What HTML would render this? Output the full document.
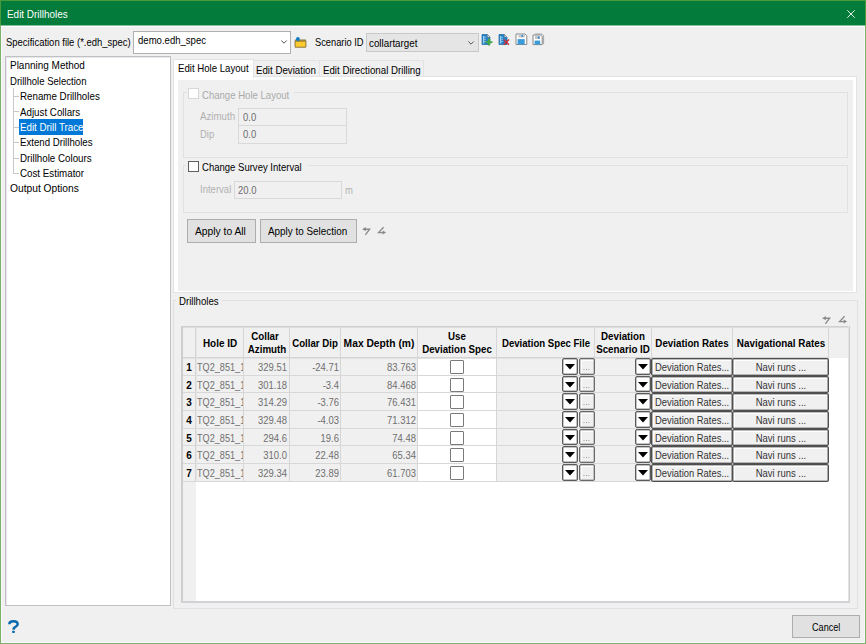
<!DOCTYPE html>
<html><head><meta charset="utf-8">
<style>
*{box-sizing:border-box;margin:0;padding:0}
html,body{width:866px;height:644px;overflow:hidden;background:#f0f0f0}
body{font-family:"Liberation Sans",sans-serif;font-size:10px;color:#000;position:relative;}
.a{position:absolute}
.t{position:absolute;white-space:nowrap;line-height:1}
svg{position:absolute;overflow:visible}
</style></head>
<body>
<div class="a" style="left:0px;top:0px;width:866px;height:644px;background:#f0f0f0;"></div>
<div class="a" style="left:0px;top:0px;width:866px;height:25px;background:#037c3b;"></div>
<div class="a" style="left:0px;top:25px;width:866px;height:1px;background:#84bf9c;"></div>
<div class="a" style="left:0px;top:0px;width:866px;height:1px;background:#4a9a3c;"></div>
<div class="a" style="left:0px;top:26px;width:866px;height:1px;background:#fbfbfb;"></div>
<div class="a" style="left:0px;top:0px;width:1px;height:644px;background:#7bb26a;"></div>
<div class="a" style="left:0px;top:0px;width:1px;height:25px;background:#4a9a3c;"></div>
<div class="a" style="left:865px;top:0px;width:1px;height:644px;background:#7bb26a;"></div>
<div class="a" style="left:865px;top:0px;width:1px;height:25px;background:#4a9a3c;"></div>
<div class="a" style="left:0px;top:643px;width:866px;height:1px;background:#7bb26a;"></div>
<div class="a" style="left:1px;top:26px;width:1px;height:617px;background:#f9f7f9;"></div>
<div class="a" style="left:864px;top:26px;width:1px;height:617px;background:#f9f7f9;"></div>
<div class="a" style="left:1px;top:642px;width:864px;height:1px;background:#f9f7f9;"></div>
<div class="t" style="left:7.4px;top:9px;font-size:10.5px;color:#fff;transform-origin:0 0;transform:scaleX(0.9446);">Edit Drillholes</div>
<svg style="left:847px;top:10px" width="8" height="8"><path d="M0.3 0.3L7.7 7.7M7.7 0.3L0.3 7.7" stroke="#fff" stroke-width="0.9"/></svg>
<div class="t" style="left:6px;top:37px;font-size:10.5px;color:#000;transform-origin:0 0;transform:scaleX(0.9011);">Specification file (*.edh_spec)</div>
<div class="a" style="left:133px;top:31px;width:158px;height:23px;background:#fff;border:1px solid #b0b0b0;"></div>
<div class="t" style="left:138.2px;top:35px;font-size:10.5px;color:#000;transform-origin:0 0;transform:scaleX(0.9104);">demo.edh_spec</div>
<svg style="left:281px;top:40px" width="6" height="4"><path d="M0.3 0.5L3 3.2L5.7 0.5" stroke="#444" stroke-width="0.9" fill="none"/></svg>
<svg style="left:294px;top:36px" width="13" height="12">
<path d="M1.2 3.9H11.8V11.1H1.2z" fill="#b8963a" stroke="#7d6a35" stroke-width="0.7"/>
<path d="M1.2 5.3H11.8V11.1H1.2z" fill="#fdcb2f" stroke="#8a7335" stroke-width="0.7"/>
<path d="M3.9 5.3C2.6 4.6 2 3.8 2 2.9A1.9 1.9 0 0 1 5.8 2.9C5.8 3.8 5.2 4.6 3.9 5.3z" fill="#0b7cc2"/>
</svg>
<div class="t" style="left:314.7px;top:37px;font-size:10.5px;color:#000;transform-origin:0 0;transform:scaleX(0.8847);">Scenario ID</div>
<div class="a" style="left:366px;top:33px;width:113px;height:19px;background:#e5e5e5;border:1px solid #c9c9c9;"></div>
<div class="t" style="left:369.1px;top:38px;font-size:10.5px;color:#000;transform-origin:0 0;transform:scaleX(0.9323);">collartarget</div>
<svg style="left:468.3px;top:41px" width="6" height="4"><path d="M0.3 0.5L3 3.2L5.7 0.5" stroke="#444" stroke-width="0.9" fill="none"/></svg>
<svg style="left:481px;top:34px" width="13" height="13"><path d="M1 0.5h5.5l2.5 2.5v7.5h-8z" fill="#2a82c4" stroke="#1d679e" stroke-width="0.7"/><path d="M6.5 0.5v2.5h2.5z" fill="#e8e8e8" stroke="#8a8a8a" stroke-width="0.6"/><path d="M2.6 2v7.6" stroke="#9fd0f0" stroke-width="1.3"/><path d="M3.4 3.3h1.4M3.4 5.4h1.4M3.4 7.5h1.4" stroke="#9fd0f0" stroke-width="0.9"/><path d="M8 4.6v7M4.5 8.1h7" stroke="#45a83f" stroke-width="1.9"/></svg>
<svg style="left:498px;top:34px" width="13" height="13"><path d="M1 0.5h5.5l2.5 2.5v7.5h-8z" fill="#2a82c4" stroke="#1d679e" stroke-width="0.7"/><path d="M6.5 0.5v2.5h2.5z" fill="#e8e8e8" stroke="#8a8a8a" stroke-width="0.6"/><path d="M2.6 2v7.6" stroke="#9fd0f0" stroke-width="1.3"/><path d="M3.4 3.3h1.4M3.4 5.4h1.4M3.4 7.5h1.4" stroke="#9fd0f0" stroke-width="0.9"/><path d="M5.8 5.5l5.2 5.2M11 5.5l-5.2 5.2" stroke="#cf2a30" stroke-width="1.35"/></svg>
<svg style="left:514.5px;top:33px" width="14" height="14"><path d="M1 1H10L11.8 2.8V11.5H1z" fill="#fff" stroke="#7c7c7c" stroke-width="0.9"/><rect x="3.4" y="1.3" width="6.3" height="3.2" fill="#c6c6c6"/><rect x="6.5" y="1.7" width="1.6" height="2.2" fill="#3d8fd3"/><rect x="2.6" y="6.1" width="7.1" height="5.4" fill="#3b9ad8"/></svg>
<svg style="left:531.5px;top:33px" width="14" height="14"><path d="M3 1H9.8L11.6 2.8V11.2" fill="none" stroke="#9a9a9a" stroke-width="0.9"/><path d="M1 2H8.6L10.2 3.6V11.6H1z" fill="#fff" stroke="#7c7c7c" stroke-width="0.9"/><rect x="3" y="2.4" width="5" height="3.6" fill="#c6c6c6"/><rect x="5.8" y="3.4" width="1.8" height="2.3" fill="#3d8fd3"/><rect x="2.6" y="7.6" width="5.6" height="4" fill="#3b9ad8"/></svg>
<div class="a" style="left:5px;top:56px;width:166px;height:550px;background:#fff;border:1px solid #c0c1c5;box-shadow:inset 1px 1px 0 #e8e8ea"></div>
<div class="t" style="left:10px;top:60px;font-size:10.5px;color:#000;transform-origin:0 0;transform:scaleX(0.9500);">Planning Method</div>
<div class="t" style="left:10px;top:76px;font-size:10.5px;color:#000;transform-origin:0 0;transform:scaleX(0.9100);">Drillhole Selection</div>
<div class="t" style="left:20px;top:91px;font-size:10.5px;color:#000;transform-origin:0 0;transform:scaleX(0.9300);">Rename Drillholes</div>
<div class="a" style="left:14px;top:96px;width:5px;height:1px;background:#c8c8c8;"></div>
<div class="t" style="left:20px;top:107px;font-size:10.5px;color:#000;transform-origin:0 0;transform:scaleX(0.9300);">Adjust Collars</div>
<div class="a" style="left:14px;top:111px;width:5px;height:1px;background:#c8c8c8;"></div>
<div class="a" style="left:19px;top:119px;width:64px;height:16px;background:#0078d7;"></div>
<div class="t" style="left:20px;top:122px;font-size:10.5px;color:#fff;transform-origin:0 0;transform:scaleX(0.9300);">Edit Drill Trace</div>
<div class="a" style="left:14px;top:127px;width:5px;height:1px;background:#c8c8c8;"></div>
<div class="t" style="left:20px;top:137px;font-size:10.5px;color:#000;transform-origin:0 0;transform:scaleX(0.9200);">Extend Drillholes</div>
<div class="a" style="left:14px;top:142px;width:5px;height:1px;background:#c8c8c8;"></div>
<div class="t" style="left:20px;top:153px;font-size:10.5px;color:#000;transform-origin:0 0;transform:scaleX(0.9300);">Drillhole Colours</div>
<div class="a" style="left:14px;top:158px;width:5px;height:1px;background:#c8c8c8;"></div>
<div class="t" style="left:20px;top:168px;font-size:10.5px;color:#000;transform-origin:0 0;transform:scaleX(0.9300);">Cost Estimator</div>
<div class="a" style="left:14px;top:173px;width:5px;height:1px;background:#c8c8c8;"></div>
<div class="t" style="left:10px;top:183px;font-size:10.5px;color:#000;transform-origin:0 0;transform:scaleX(0.9750);">Output Options</div>
<div class="a" style="left:13px;top:88px;width:1px;height:86px;background:#c8c8c8;"></div>
<div class="a" style="left:173px;top:76px;width:684px;height:217px;background:#fff;border:1px solid #e3e3e3;"></div>
<div class="a" style="left:178px;top:80px;width:675px;height:211px;background:#f0f0f0;"></div>
<div class="a" style="left:253px;top:60px;width:67px;height:17px;background:#f0f0f0;border:1px solid #e3e3e3;"></div>
<div class="a" style="left:319px;top:60px;width:105px;height:17px;background:#f0f0f0;border:1px solid #e3e3e3;"></div>
<div class="a" style="left:173px;top:59px;width:81px;height:19px;background:#fff;border:1px solid #e3e3e3;border-bottom:none"></div>
<div class="t" style="left:178.2px;top:63px;font-size:10.5px;color:#000;transform-origin:0 0;transform:scaleX(0.9166);">Edit Hole Layout</div>
<div class="t" style="left:256px;top:65px;font-size:10.5px;color:#000;transform-origin:0 0;transform:scaleX(0.9239);">Edit Deviation</div>
<div class="t" style="left:323.1px;top:65px;font-size:10.5px;color:#000;transform-origin:0 0;transform:scaleX(0.9246);">Edit Directional Drilling</div>
<div class="a" style="left:183px;top:92px;width:665px;height:66px;border:1px solid #e1e1e1;"></div>
<div class="a" style="left:187px;top:84px;width:107px;height:12px;background:#f0f0f0;"></div>
<div class="a" style="left:188px;top:88px;width:11px;height:11px;background:#fff;border:1px solid #d8d8d8;"></div>
<div class="t" style="left:202px;top:90px;font-size:10.5px;color:#aaaaaa;transform-origin:0 0;transform:scaleX(0.9111);">Change Hole Layout</div>
<div class="t" style="left:199.7px;top:111px;font-size:10.5px;color:#b0b0b0;transform-origin:0 0;transform:scaleX(0.9268);">Azimuth</div>
<div class="a" style="left:238px;top:108px;width:109px;height:18px;background:#f0f0f0;border:1px solid #d9d9d9;"></div>
<div class="t" style="left:243px;top:112px;font-size:10.5px;color:#6d6d6d;transform-origin:0 0;transform:scaleX(0.9000);">0.0</div>
<div class="t" style="left:200px;top:129px;font-size:10.5px;color:#b0b0b0;transform-origin:0 0;transform:scaleX(0.9000);">Dip</div>
<div class="a" style="left:238px;top:125px;width:109px;height:19px;background:#f0f0f0;border:1px solid #d9d9d9;"></div>
<div class="t" style="left:243px;top:129px;font-size:10.5px;color:#6d6d6d;transform-origin:0 0;transform:scaleX(0.9000);">0.0</div>
<div class="a" style="left:183px;top:165px;width:665px;height:48px;border:1px solid #e1e1e1;"></div>
<div class="a" style="left:186px;top:158px;width:122px;height:12px;background:#f0f0f0;"></div>
<div class="a" style="left:188px;top:161px;width:11px;height:11px;background:#fff;border:1px solid #5e5e5e;"></div>
<div class="t" style="left:202px;top:162px;font-size:10.5px;color:#000;transform-origin:0 0;transform:scaleX(0.9077);">Change Survey Interval</div>
<div class="t" style="left:200px;top:184px;font-size:10.5px;color:#b0b0b0;transform-origin:0 0;transform:scaleX(0.9091);">Interval</div>
<div class="a" style="left:234px;top:181px;width:108px;height:18px;background:#f0f0f0;border:1px solid #d9d9d9;"></div>
<div class="t" style="left:238px;top:185px;font-size:10.5px;color:#6d6d6d;transform-origin:0 0;transform:scaleX(0.9000);">20.0</div>
<div class="t" style="left:345px;top:185px;font-size:10.5px;color:#b0b0b0;transform-origin:0 0;transform:scaleX(0.9000);">m</div>
<div class="a" style="left:187px;top:219px;width:69px;height:24px;background:#e1e1e1;border:1px solid #adadad;"></div>
<div class="t" style="left:195.4px;top:226px;font-size:10.5px;color:#000;transform-origin:0 0;transform:scaleX(0.9791);">Apply to All</div>
<div class="a" style="left:260px;top:219px;width:97px;height:24px;background:#e1e1e1;border:1px solid #adadad;"></div>
<div class="t" style="left:268.4px;top:226px;font-size:10.5px;color:#000;transform-origin:0 0;transform:scaleX(0.9417);">Apply to Selection</div>
<svg style="left:362px;top:227px" width="10" height="10"><path d="M0.2 2.2L3.8 0.1V4.3z" fill="#8a8a8a"/><path d="M3 2.2H7.6L3.4 7.8" stroke="#8a8a8a" stroke-width="1.35" fill="none" stroke-linejoin="miter"/></svg>
<svg style="left:378px;top:227px" width="10" height="10"><path d="M5.6 0.3L0.6 5.6H5.2" stroke="#8a8a8a" stroke-width="1.35" fill="none"/><path d="M8.1 5.5L4.6 3.4V7.6z" fill="#8a8a8a"/></svg>
<div class="a" style="left:173px;top:300px;width:685px;height:309px;border:1px solid #e0e0e0;"></div>
<div class="a" style="left:176px;top:294px;width:46px;height:12px;background:#f0f0f0;"></div>
<div class="t" style="left:178.6px;top:296px;font-size:10.5px;color:#000;transform-origin:0 0;transform:scaleX(0.9178);">Drillholes</div>
<svg style="left:821.5px;top:316.3px" width="10" height="10"><path d="M0.2 2.2L3.8 0.1V4.3z" fill="#8a8a8a"/><path d="M3 2.2H7.6L3.4 7.8" stroke="#8a8a8a" stroke-width="1.35" fill="none" stroke-linejoin="miter"/></svg>
<svg style="left:838.8px;top:316.3px" width="10" height="10"><path d="M5.6 0.3L0.6 5.6H5.2" stroke="#8a8a8a" stroke-width="1.35" fill="none"/><path d="M8.1 5.5L4.6 3.4V7.6z" fill="#8a8a8a"/></svg>
<div class="a" style="left:181px;top:326px;width:669px;height:277px;background:#fff;"></div>
<div class="a" style="left:183px;top:328px;width:13px;height:273px;background:#f0f0f0;"></div>
<div class="a" style="left:183px;top:328px;width:665px;height:30px;background:#f0f0f0;"></div>
<div class="a" style="left:196px;top:358px;width:47px;height:17px;background:#f0f0f0;"></div>
<div class="a" style="left:244px;top:358px;width:45px;height:17px;background:#f0f0f0;"></div>
<div class="a" style="left:290px;top:358px;width:50px;height:17px;background:#f0f0f0;"></div>
<div class="a" style="left:341px;top:358px;width:76px;height:17px;background:#f0f0f0;"></div>
<div class="a" style="left:497px;top:358px;width:97px;height:17px;background:#f0f0f0;"></div>
<div class="a" style="left:595px;top:358px;width:56px;height:17px;background:#f0f0f0;"></div>
<div class="a" style="left:196px;top:376px;width:47px;height:16px;background:#f0f0f0;"></div>
<div class="a" style="left:244px;top:376px;width:45px;height:16px;background:#f0f0f0;"></div>
<div class="a" style="left:290px;top:376px;width:50px;height:16px;background:#f0f0f0;"></div>
<div class="a" style="left:341px;top:376px;width:76px;height:16px;background:#f0f0f0;"></div>
<div class="a" style="left:497px;top:376px;width:97px;height:16px;background:#f0f0f0;"></div>
<div class="a" style="left:595px;top:376px;width:56px;height:16px;background:#f0f0f0;"></div>
<div class="a" style="left:196px;top:393px;width:47px;height:17px;background:#f0f0f0;"></div>
<div class="a" style="left:244px;top:393px;width:45px;height:17px;background:#f0f0f0;"></div>
<div class="a" style="left:290px;top:393px;width:50px;height:17px;background:#f0f0f0;"></div>
<div class="a" style="left:341px;top:393px;width:76px;height:17px;background:#f0f0f0;"></div>
<div class="a" style="left:497px;top:393px;width:97px;height:17px;background:#f0f0f0;"></div>
<div class="a" style="left:595px;top:393px;width:56px;height:17px;background:#f0f0f0;"></div>
<div class="a" style="left:196px;top:411px;width:47px;height:17px;background:#f0f0f0;"></div>
<div class="a" style="left:244px;top:411px;width:45px;height:17px;background:#f0f0f0;"></div>
<div class="a" style="left:290px;top:411px;width:50px;height:17px;background:#f0f0f0;"></div>
<div class="a" style="left:341px;top:411px;width:76px;height:17px;background:#f0f0f0;"></div>
<div class="a" style="left:497px;top:411px;width:97px;height:17px;background:#f0f0f0;"></div>
<div class="a" style="left:595px;top:411px;width:56px;height:17px;background:#f0f0f0;"></div>
<div class="a" style="left:196px;top:429px;width:47px;height:16px;background:#f0f0f0;"></div>
<div class="a" style="left:244px;top:429px;width:45px;height:16px;background:#f0f0f0;"></div>
<div class="a" style="left:290px;top:429px;width:50px;height:16px;background:#f0f0f0;"></div>
<div class="a" style="left:341px;top:429px;width:76px;height:16px;background:#f0f0f0;"></div>
<div class="a" style="left:497px;top:429px;width:97px;height:16px;background:#f0f0f0;"></div>
<div class="a" style="left:595px;top:429px;width:56px;height:16px;background:#f0f0f0;"></div>
<div class="a" style="left:196px;top:446px;width:47px;height:17px;background:#f0f0f0;"></div>
<div class="a" style="left:244px;top:446px;width:45px;height:17px;background:#f0f0f0;"></div>
<div class="a" style="left:290px;top:446px;width:50px;height:17px;background:#f0f0f0;"></div>
<div class="a" style="left:341px;top:446px;width:76px;height:17px;background:#f0f0f0;"></div>
<div class="a" style="left:497px;top:446px;width:97px;height:17px;background:#f0f0f0;"></div>
<div class="a" style="left:595px;top:446px;width:56px;height:17px;background:#f0f0f0;"></div>
<div class="a" style="left:196px;top:464px;width:47px;height:17px;background:#f0f0f0;"></div>
<div class="a" style="left:244px;top:464px;width:45px;height:17px;background:#f0f0f0;"></div>
<div class="a" style="left:290px;top:464px;width:50px;height:17px;background:#f0f0f0;"></div>
<div class="a" style="left:341px;top:464px;width:76px;height:17px;background:#f0f0f0;"></div>
<div class="a" style="left:497px;top:464px;width:97px;height:17px;background:#f0f0f0;"></div>
<div class="a" style="left:595px;top:464px;width:56px;height:17px;background:#f0f0f0;"></div>
<div class="a" style="left:183px;top:357px;width:646px;height:1px;background:#d4d4d4;"></div>
<div class="a" style="left:183px;top:358px;width:646px;height:1px;background:#e2e2e2;"></div>
<div class="a" style="left:183px;top:375px;width:646px;height:1px;background:#d8d8d8;"></div>
<div class="a" style="left:183px;top:392px;width:646px;height:1px;background:#d8d8d8;"></div>
<div class="a" style="left:183px;top:410px;width:646px;height:1px;background:#d8d8d8;"></div>
<div class="a" style="left:183px;top:428px;width:646px;height:1px;background:#d8d8d8;"></div>
<div class="a" style="left:183px;top:445px;width:646px;height:1px;background:#d8d8d8;"></div>
<div class="a" style="left:183px;top:463px;width:646px;height:1px;background:#d8d8d8;"></div>
<div class="a" style="left:183px;top:481px;width:646px;height:1px;background:#d8d8d8;"></div>
<div class="a" style="left:195px;top:328px;width:1px;height:154px;background:#d6d6d6;"></div>
<div class="a" style="left:243px;top:328px;width:1px;height:154px;background:#d6d6d6;"></div>
<div class="a" style="left:289px;top:328px;width:1px;height:154px;background:#d6d6d6;"></div>
<div class="a" style="left:340px;top:328px;width:1px;height:154px;background:#d6d6d6;"></div>
<div class="a" style="left:417px;top:328px;width:1px;height:154px;background:#d6d6d6;"></div>
<div class="a" style="left:496px;top:328px;width:1px;height:154px;background:#d6d6d6;"></div>
<div class="a" style="left:594px;top:328px;width:1px;height:154px;background:#d6d6d6;"></div>
<div class="a" style="left:651px;top:328px;width:1px;height:154px;background:#d6d6d6;"></div>
<div class="a" style="left:732px;top:328px;width:1px;height:154px;background:#d6d6d6;"></div>
<div class="a" style="left:828px;top:328px;width:1px;height:154px;background:#d6d6d6;"></div>
<div class="a" style="left:196px;top:328px;width:1px;height:154px;background:#e4e4e4;"></div>
<div class="a" style="left:181px;top:326px;width:669px;height:1px;background:#cfcfcf;"></div>
<div class="a" style="left:182px;top:327px;width:667px;height:1px;background:#dcdcdc;"></div>
<div class="a" style="left:181px;top:326px;width:2px;height:277px;background:#cdcdcd;"></div>
<div class="a" style="left:848px;top:326px;width:1px;height:277px;background:#e4e4e6;"></div>
<div class="a" style="left:849px;top:326px;width:1px;height:277px;background:#cdcdd1;"></div>
<div class="a" style="left:181px;top:601px;width:669px;height:2px;background:#d2d2d6;"></div>
<div class="t" style="left:160.0px;width:120px;text-align:center;transform-origin:50% 0;top:338px;font-size:10.5px;color:#000;font-weight:bold;transform:scaleX(0.9457);">Hole ID</div>
<div class="t" style="left:205.0px;width:120px;text-align:center;transform-origin:50% 0;top:331px;font-size:10.5px;color:#000;font-weight:bold;transform:scaleX(0.9300);">Collar</div>
<div class="t" style="left:206.5px;width:120px;text-align:center;transform-origin:50% 0;top:344px;font-size:10.5px;color:#000;font-weight:bold;transform:scaleX(0.9300);">Azimuth</div>
<div class="t" style="left:255.39999999999998px;width:120px;text-align:center;transform-origin:50% 0;top:338px;font-size:10.5px;color:#000;font-weight:bold;transform:scaleX(0.9192);">Collar Dip</div>
<div class="t" style="left:319.2px;width:120px;text-align:center;transform-origin:50% 0;top:338px;font-size:10.5px;color:#000;font-weight:bold;transform:scaleX(0.9786);">Max Depth (m)</div>
<div class="t" style="left:397.2px;width:120px;text-align:center;transform-origin:50% 0;top:331px;font-size:10.5px;color:#000;font-weight:bold;transform:scaleX(0.9300);">Use</div>
<div class="t" style="left:397.2px;width:120px;text-align:center;transform-origin:50% 0;top:344px;font-size:10.5px;color:#000;font-weight:bold;transform:scaleX(0.9253);">Deviation Spec</div>
<div class="t" style="left:485.79999999999995px;width:120px;text-align:center;transform-origin:50% 0;top:338px;font-size:10.5px;color:#000;font-weight:bold;transform:scaleX(0.9146);">Deviation Spec File</div>
<div class="t" style="left:563.2px;width:120px;text-align:center;transform-origin:50% 0;top:331px;font-size:10.5px;color:#000;font-weight:bold;transform:scaleX(0.9300);">Deviation</div>
<div class="t" style="left:563.2px;width:120px;text-align:center;transform-origin:50% 0;top:344px;font-size:10.5px;color:#000;font-weight:bold;transform:scaleX(0.9300);">Scenario ID</div>
<div class="t" style="left:632.0px;width:120px;text-align:center;transform-origin:50% 0;top:338px;font-size:10.5px;color:#000;font-weight:bold;transform:scaleX(0.9300);">Deviation Rates</div>
<div class="t" style="left:721.2px;width:120px;text-align:center;transform-origin:50% 0;top:338px;font-size:10.5px;color:#000;font-weight:bold;transform:scaleX(0.9404);">Navigational Rates</div>
<div class="t" style="left:183.0px;width:12px;text-align:center;transform-origin:50% 0;top:362px;font-size:10.5px;color:#000;font-weight:bold;transform:scaleX(0.9500);">1</div>
<div class="a" style="left:197px;top:358px;width:46px;height:17px;overflow:hidden">
<div class="t" style="left:0px;top:4px;font-size:10.5px;color:#6f6f6f;transform-origin:0 0;transform:scaleX(0.8700);">TQ2_851_1</div>
</div>
<div class="t" style="left:242px;width:45px;text-align:right;transform-origin:100% 0;top:362px;font-size:10.5px;color:#6f6f6f;transform:scaleX(0.9000);">329.51</div>
<div class="t" style="left:290.5px;width:48px;text-align:right;transform-origin:100% 0;top:362px;font-size:10.5px;color:#6f6f6f;transform:scaleX(0.9000);">-24.71</div>
<div class="t" style="left:345.8px;width:70px;text-align:right;transform-origin:100% 0;top:362px;font-size:10.5px;color:#6f6f6f;transform:scaleX(0.9000);">83.763</div>
<div class="a" style="left:450px;top:360px;width:14px;height:14px;background:#fff;border:1px solid #7a7a7a;border-radius:1px"></div>
<div class="a" style="left:562px;top:358px;width:16px;height:17px;background:#fff;border:1px solid #5a5a5a;box-shadow:inset 0 0 0 0.5px #888;border-radius:2px"></div>
<svg style="left:565px;top:363.5px" width="10" height="6"><path d="M0 0H10L5 5.6z" fill="#000"/></svg>
<div class="a" style="left:635px;top:358px;width:16px;height:17px;background:#fff;border:1px solid #5a5a5a;box-shadow:inset 0 0 0 0.5px #888;border-radius:2px"></div>
<svg style="left:638px;top:363.5px" width="10" height="6"><path d="M0 0H10L5 5.6z" fill="#000"/></svg>
<div class="a" style="left:579px;top:358px;width:16px;height:17px;background:#f0f0f0;border:1px solid #6a6a6a;box-shadow:inset 0 0 0 0.5px #999, inset 1px 1px 0 1px #fff;border-radius:2px"></div>
<svg style="left:583px;top:369px" width="8" height="2"><path d="M0.5 0.5h1M3 0.5h1M5.5 0.5h1" stroke="#a79b8b" stroke-width="1"/></svg>
<div class="a" style="left:651px;top:358px;width:82px;height:18px;background:#f0f0f0;border:1px solid #4f4f4f;box-shadow:inset 0 0 0 0.6px #7a7a7a, inset 1px 1px 0 1px #fff;border-radius:2px"></div>
<div class="a" style="left:732px;top:358px;width:97px;height:18px;background:#f0f0f0;border:1px solid #4f4f4f;box-shadow:inset 0 0 0 0.6px #7a7a7a, inset 1px 1px 0 1px #fff;border-radius:2px"></div>
<div class="t" style="left:655.0px;top:362px;font-size:10.5px;color:#333;transform-origin:0 0;transform:scaleX(0.8956);">Deviation Rates...</div>
<div class="t" style="left:736.0px;width:90px;text-align:center;transform-origin:50% 0;top:362px;font-size:10.5px;color:#333;transform:scaleX(0.9000);">Navi runs ...</div>
<div class="t" style="left:183.0px;width:12px;text-align:center;transform-origin:50% 0;top:380px;font-size:10.5px;color:#000;font-weight:bold;transform:scaleX(0.9500);">2</div>
<div class="a" style="left:197px;top:376px;width:46px;height:16px;overflow:hidden">
<div class="t" style="left:0px;top:4px;font-size:10.5px;color:#6f6f6f;transform-origin:0 0;transform:scaleX(0.8700);">TQ2_851_1</div>
</div>
<div class="t" style="left:242px;width:45px;text-align:right;transform-origin:100% 0;top:380px;font-size:10.5px;color:#6f6f6f;transform:scaleX(0.9000);">301.18</div>
<div class="t" style="left:290.5px;width:48px;text-align:right;transform-origin:100% 0;top:380px;font-size:10.5px;color:#6f6f6f;transform:scaleX(0.9000);">-3.4</div>
<div class="t" style="left:345.8px;width:70px;text-align:right;transform-origin:100% 0;top:380px;font-size:10.5px;color:#6f6f6f;transform:scaleX(0.9000);">84.468</div>
<div class="a" style="left:450px;top:378px;width:14px;height:14px;background:#fff;border:1px solid #7a7a7a;border-radius:1px"></div>
<div class="a" style="left:562px;top:376px;width:16px;height:16px;background:#fff;border:1px solid #5a5a5a;box-shadow:inset 0 0 0 0.5px #888;border-radius:2px"></div>
<svg style="left:565px;top:381.5px" width="10" height="6"><path d="M0 0H10L5 5.6z" fill="#000"/></svg>
<div class="a" style="left:635px;top:376px;width:16px;height:16px;background:#fff;border:1px solid #5a5a5a;box-shadow:inset 0 0 0 0.5px #888;border-radius:2px"></div>
<svg style="left:638px;top:381.5px" width="10" height="6"><path d="M0 0H10L5 5.6z" fill="#000"/></svg>
<div class="a" style="left:579px;top:376px;width:16px;height:16px;background:#f0f0f0;border:1px solid #6a6a6a;box-shadow:inset 0 0 0 0.5px #999, inset 1px 1px 0 1px #fff;border-radius:2px"></div>
<svg style="left:583px;top:387px" width="8" height="2"><path d="M0.5 0.5h1M3 0.5h1M5.5 0.5h1" stroke="#a79b8b" stroke-width="1"/></svg>
<div class="a" style="left:651px;top:376px;width:82px;height:17px;background:#f0f0f0;border:1px solid #4f4f4f;box-shadow:inset 0 0 0 0.6px #7a7a7a, inset 1px 1px 0 1px #fff;border-radius:2px"></div>
<div class="a" style="left:732px;top:376px;width:97px;height:17px;background:#f0f0f0;border:1px solid #4f4f4f;box-shadow:inset 0 0 0 0.6px #7a7a7a, inset 1px 1px 0 1px #fff;border-radius:2px"></div>
<div class="t" style="left:655.0px;top:380px;font-size:10.5px;color:#333;transform-origin:0 0;transform:scaleX(0.8956);">Deviation Rates...</div>
<div class="t" style="left:736.0px;width:90px;text-align:center;transform-origin:50% 0;top:380px;font-size:10.5px;color:#333;transform:scaleX(0.9000);">Navi runs ...</div>
<div class="t" style="left:183.0px;width:12px;text-align:center;transform-origin:50% 0;top:397px;font-size:10.5px;color:#000;font-weight:bold;transform:scaleX(0.9500);">3</div>
<div class="a" style="left:197px;top:393px;width:46px;height:17px;overflow:hidden">
<div class="t" style="left:0px;top:4px;font-size:10.5px;color:#6f6f6f;transform-origin:0 0;transform:scaleX(0.8700);">TQ2_851_1</div>
</div>
<div class="t" style="left:242px;width:45px;text-align:right;transform-origin:100% 0;top:397px;font-size:10.5px;color:#6f6f6f;transform:scaleX(0.9000);">314.29</div>
<div class="t" style="left:290.5px;width:48px;text-align:right;transform-origin:100% 0;top:397px;font-size:10.5px;color:#6f6f6f;transform:scaleX(0.9000);">-3.76</div>
<div class="t" style="left:345.8px;width:70px;text-align:right;transform-origin:100% 0;top:397px;font-size:10.5px;color:#6f6f6f;transform:scaleX(0.9000);">76.431</div>
<div class="a" style="left:450px;top:395px;width:14px;height:14px;background:#fff;border:1px solid #7a7a7a;border-radius:1px"></div>
<div class="a" style="left:562px;top:393px;width:16px;height:17px;background:#fff;border:1px solid #5a5a5a;box-shadow:inset 0 0 0 0.5px #888;border-radius:2px"></div>
<svg style="left:565px;top:398.5px" width="10" height="6"><path d="M0 0H10L5 5.6z" fill="#000"/></svg>
<div class="a" style="left:635px;top:393px;width:16px;height:17px;background:#fff;border:1px solid #5a5a5a;box-shadow:inset 0 0 0 0.5px #888;border-radius:2px"></div>
<svg style="left:638px;top:398.5px" width="10" height="6"><path d="M0 0H10L5 5.6z" fill="#000"/></svg>
<div class="a" style="left:579px;top:393px;width:16px;height:17px;background:#f0f0f0;border:1px solid #6a6a6a;box-shadow:inset 0 0 0 0.5px #999, inset 1px 1px 0 1px #fff;border-radius:2px"></div>
<svg style="left:583px;top:404px" width="8" height="2"><path d="M0.5 0.5h1M3 0.5h1M5.5 0.5h1" stroke="#a79b8b" stroke-width="1"/></svg>
<div class="a" style="left:651px;top:393px;width:82px;height:18px;background:#f0f0f0;border:1px solid #4f4f4f;box-shadow:inset 0 0 0 0.6px #7a7a7a, inset 1px 1px 0 1px #fff;border-radius:2px"></div>
<div class="a" style="left:732px;top:393px;width:97px;height:18px;background:#f0f0f0;border:1px solid #4f4f4f;box-shadow:inset 0 0 0 0.6px #7a7a7a, inset 1px 1px 0 1px #fff;border-radius:2px"></div>
<div class="t" style="left:655.0px;top:397px;font-size:10.5px;color:#333;transform-origin:0 0;transform:scaleX(0.8956);">Deviation Rates...</div>
<div class="t" style="left:736.0px;width:90px;text-align:center;transform-origin:50% 0;top:397px;font-size:10.5px;color:#333;transform:scaleX(0.9000);">Navi runs ...</div>
<div class="t" style="left:183.0px;width:12px;text-align:center;transform-origin:50% 0;top:415px;font-size:10.5px;color:#000;font-weight:bold;transform:scaleX(0.9500);">4</div>
<div class="a" style="left:197px;top:411px;width:46px;height:17px;overflow:hidden">
<div class="t" style="left:0px;top:4px;font-size:10.5px;color:#6f6f6f;transform-origin:0 0;transform:scaleX(0.8700);">TQ2_851_1</div>
</div>
<div class="t" style="left:242px;width:45px;text-align:right;transform-origin:100% 0;top:415px;font-size:10.5px;color:#6f6f6f;transform:scaleX(0.9000);">329.48</div>
<div class="t" style="left:290.5px;width:48px;text-align:right;transform-origin:100% 0;top:415px;font-size:10.5px;color:#6f6f6f;transform:scaleX(0.9000);">-4.03</div>
<div class="t" style="left:345.8px;width:70px;text-align:right;transform-origin:100% 0;top:415px;font-size:10.5px;color:#6f6f6f;transform:scaleX(0.9000);">71.312</div>
<div class="a" style="left:450px;top:413px;width:14px;height:14px;background:#fff;border:1px solid #7a7a7a;border-radius:1px"></div>
<div class="a" style="left:562px;top:411px;width:16px;height:17px;background:#fff;border:1px solid #5a5a5a;box-shadow:inset 0 0 0 0.5px #888;border-radius:2px"></div>
<svg style="left:565px;top:416.5px" width="10" height="6"><path d="M0 0H10L5 5.6z" fill="#000"/></svg>
<div class="a" style="left:635px;top:411px;width:16px;height:17px;background:#fff;border:1px solid #5a5a5a;box-shadow:inset 0 0 0 0.5px #888;border-radius:2px"></div>
<svg style="left:638px;top:416.5px" width="10" height="6"><path d="M0 0H10L5 5.6z" fill="#000"/></svg>
<div class="a" style="left:579px;top:411px;width:16px;height:17px;background:#f0f0f0;border:1px solid #6a6a6a;box-shadow:inset 0 0 0 0.5px #999, inset 1px 1px 0 1px #fff;border-radius:2px"></div>
<svg style="left:583px;top:422px" width="8" height="2"><path d="M0.5 0.5h1M3 0.5h1M5.5 0.5h1" stroke="#a79b8b" stroke-width="1"/></svg>
<div class="a" style="left:651px;top:411px;width:82px;height:18px;background:#f0f0f0;border:1px solid #4f4f4f;box-shadow:inset 0 0 0 0.6px #7a7a7a, inset 1px 1px 0 1px #fff;border-radius:2px"></div>
<div class="a" style="left:732px;top:411px;width:97px;height:18px;background:#f0f0f0;border:1px solid #4f4f4f;box-shadow:inset 0 0 0 0.6px #7a7a7a, inset 1px 1px 0 1px #fff;border-radius:2px"></div>
<div class="t" style="left:655.0px;top:415px;font-size:10.5px;color:#333;transform-origin:0 0;transform:scaleX(0.8956);">Deviation Rates...</div>
<div class="t" style="left:736.0px;width:90px;text-align:center;transform-origin:50% 0;top:415px;font-size:10.5px;color:#333;transform:scaleX(0.9000);">Navi runs ...</div>
<div class="t" style="left:183.0px;width:12px;text-align:center;transform-origin:50% 0;top:433px;font-size:10.5px;color:#000;font-weight:bold;transform:scaleX(0.9500);">5</div>
<div class="a" style="left:197px;top:429px;width:46px;height:16px;overflow:hidden">
<div class="t" style="left:0px;top:4px;font-size:10.5px;color:#6f6f6f;transform-origin:0 0;transform:scaleX(0.8700);">TQ2_851_1</div>
</div>
<div class="t" style="left:242px;width:45px;text-align:right;transform-origin:100% 0;top:433px;font-size:10.5px;color:#6f6f6f;transform:scaleX(0.9000);">294.6</div>
<div class="t" style="left:290.5px;width:48px;text-align:right;transform-origin:100% 0;top:433px;font-size:10.5px;color:#6f6f6f;transform:scaleX(0.9000);">19.6</div>
<div class="t" style="left:345.8px;width:70px;text-align:right;transform-origin:100% 0;top:433px;font-size:10.5px;color:#6f6f6f;transform:scaleX(0.9000);">74.48</div>
<div class="a" style="left:450px;top:431px;width:14px;height:14px;background:#fff;border:1px solid #7a7a7a;border-radius:1px"></div>
<div class="a" style="left:562px;top:429px;width:16px;height:16px;background:#fff;border:1px solid #5a5a5a;box-shadow:inset 0 0 0 0.5px #888;border-radius:2px"></div>
<svg style="left:565px;top:434.5px" width="10" height="6"><path d="M0 0H10L5 5.6z" fill="#000"/></svg>
<div class="a" style="left:635px;top:429px;width:16px;height:16px;background:#fff;border:1px solid #5a5a5a;box-shadow:inset 0 0 0 0.5px #888;border-radius:2px"></div>
<svg style="left:638px;top:434.5px" width="10" height="6"><path d="M0 0H10L5 5.6z" fill="#000"/></svg>
<div class="a" style="left:579px;top:429px;width:16px;height:16px;background:#f0f0f0;border:1px solid #6a6a6a;box-shadow:inset 0 0 0 0.5px #999, inset 1px 1px 0 1px #fff;border-radius:2px"></div>
<svg style="left:583px;top:440px" width="8" height="2"><path d="M0.5 0.5h1M3 0.5h1M5.5 0.5h1" stroke="#a79b8b" stroke-width="1"/></svg>
<div class="a" style="left:651px;top:429px;width:82px;height:17px;background:#f0f0f0;border:1px solid #4f4f4f;box-shadow:inset 0 0 0 0.6px #7a7a7a, inset 1px 1px 0 1px #fff;border-radius:2px"></div>
<div class="a" style="left:732px;top:429px;width:97px;height:17px;background:#f0f0f0;border:1px solid #4f4f4f;box-shadow:inset 0 0 0 0.6px #7a7a7a, inset 1px 1px 0 1px #fff;border-radius:2px"></div>
<div class="t" style="left:655.0px;top:433px;font-size:10.5px;color:#333;transform-origin:0 0;transform:scaleX(0.8956);">Deviation Rates...</div>
<div class="t" style="left:736.0px;width:90px;text-align:center;transform-origin:50% 0;top:433px;font-size:10.5px;color:#333;transform:scaleX(0.9000);">Navi runs ...</div>
<div class="t" style="left:183.0px;width:12px;text-align:center;transform-origin:50% 0;top:450px;font-size:10.5px;color:#000;font-weight:bold;transform:scaleX(0.9500);">6</div>
<div class="a" style="left:197px;top:446px;width:46px;height:17px;overflow:hidden">
<div class="t" style="left:0px;top:4px;font-size:10.5px;color:#6f6f6f;transform-origin:0 0;transform:scaleX(0.8700);">TQ2_851_1</div>
</div>
<div class="t" style="left:242px;width:45px;text-align:right;transform-origin:100% 0;top:450px;font-size:10.5px;color:#6f6f6f;transform:scaleX(0.9000);">310.0</div>
<div class="t" style="left:290.5px;width:48px;text-align:right;transform-origin:100% 0;top:450px;font-size:10.5px;color:#6f6f6f;transform:scaleX(0.9000);">22.48</div>
<div class="t" style="left:345.8px;width:70px;text-align:right;transform-origin:100% 0;top:450px;font-size:10.5px;color:#6f6f6f;transform:scaleX(0.9000);">65.34</div>
<div class="a" style="left:450px;top:448px;width:14px;height:14px;background:#fff;border:1px solid #7a7a7a;border-radius:1px"></div>
<div class="a" style="left:562px;top:446px;width:16px;height:17px;background:#fff;border:1px solid #5a5a5a;box-shadow:inset 0 0 0 0.5px #888;border-radius:2px"></div>
<svg style="left:565px;top:451.5px" width="10" height="6"><path d="M0 0H10L5 5.6z" fill="#000"/></svg>
<div class="a" style="left:635px;top:446px;width:16px;height:17px;background:#fff;border:1px solid #5a5a5a;box-shadow:inset 0 0 0 0.5px #888;border-radius:2px"></div>
<svg style="left:638px;top:451.5px" width="10" height="6"><path d="M0 0H10L5 5.6z" fill="#000"/></svg>
<div class="a" style="left:579px;top:446px;width:16px;height:17px;background:#f0f0f0;border:1px solid #6a6a6a;box-shadow:inset 0 0 0 0.5px #999, inset 1px 1px 0 1px #fff;border-radius:2px"></div>
<svg style="left:583px;top:457px" width="8" height="2"><path d="M0.5 0.5h1M3 0.5h1M5.5 0.5h1" stroke="#a79b8b" stroke-width="1"/></svg>
<div class="a" style="left:651px;top:446px;width:82px;height:18px;background:#f0f0f0;border:1px solid #4f4f4f;box-shadow:inset 0 0 0 0.6px #7a7a7a, inset 1px 1px 0 1px #fff;border-radius:2px"></div>
<div class="a" style="left:732px;top:446px;width:97px;height:18px;background:#f0f0f0;border:1px solid #4f4f4f;box-shadow:inset 0 0 0 0.6px #7a7a7a, inset 1px 1px 0 1px #fff;border-radius:2px"></div>
<div class="t" style="left:655.0px;top:450px;font-size:10.5px;color:#333;transform-origin:0 0;transform:scaleX(0.8956);">Deviation Rates...</div>
<div class="t" style="left:736.0px;width:90px;text-align:center;transform-origin:50% 0;top:450px;font-size:10.5px;color:#333;transform:scaleX(0.9000);">Navi runs ...</div>
<div class="t" style="left:183.0px;width:12px;text-align:center;transform-origin:50% 0;top:468px;font-size:10.5px;color:#000;font-weight:bold;transform:scaleX(0.9500);">7</div>
<div class="a" style="left:197px;top:464px;width:46px;height:17px;overflow:hidden">
<div class="t" style="left:0px;top:4px;font-size:10.5px;color:#6f6f6f;transform-origin:0 0;transform:scaleX(0.8700);">TQ2_851_1</div>
</div>
<div class="t" style="left:242px;width:45px;text-align:right;transform-origin:100% 0;top:468px;font-size:10.5px;color:#6f6f6f;transform:scaleX(0.9000);">329.34</div>
<div class="t" style="left:290.5px;width:48px;text-align:right;transform-origin:100% 0;top:468px;font-size:10.5px;color:#6f6f6f;transform:scaleX(0.9000);">23.89</div>
<div class="t" style="left:345.8px;width:70px;text-align:right;transform-origin:100% 0;top:468px;font-size:10.5px;color:#6f6f6f;transform:scaleX(0.9000);">61.703</div>
<div class="a" style="left:450px;top:466px;width:14px;height:14px;background:#fff;border:1px solid #7a7a7a;border-radius:1px"></div>
<div class="a" style="left:562px;top:464px;width:16px;height:17px;background:#fff;border:1px solid #5a5a5a;box-shadow:inset 0 0 0 0.5px #888;border-radius:2px"></div>
<svg style="left:565px;top:469.5px" width="10" height="6"><path d="M0 0H10L5 5.6z" fill="#000"/></svg>
<div class="a" style="left:635px;top:464px;width:16px;height:17px;background:#fff;border:1px solid #5a5a5a;box-shadow:inset 0 0 0 0.5px #888;border-radius:2px"></div>
<svg style="left:638px;top:469.5px" width="10" height="6"><path d="M0 0H10L5 5.6z" fill="#000"/></svg>
<div class="a" style="left:579px;top:464px;width:16px;height:17px;background:#f0f0f0;border:1px solid #6a6a6a;box-shadow:inset 0 0 0 0.5px #999, inset 1px 1px 0 1px #fff;border-radius:2px"></div>
<svg style="left:583px;top:475px" width="8" height="2"><path d="M0.5 0.5h1M3 0.5h1M5.5 0.5h1" stroke="#a79b8b" stroke-width="1"/></svg>
<div class="a" style="left:651px;top:464px;width:82px;height:18px;background:#f0f0f0;border:1px solid #4f4f4f;box-shadow:inset 0 0 0 0.6px #7a7a7a, inset 1px 1px 0 1px #fff;border-radius:2px"></div>
<div class="a" style="left:732px;top:464px;width:97px;height:18px;background:#f0f0f0;border:1px solid #4f4f4f;box-shadow:inset 0 0 0 0.6px #7a7a7a, inset 1px 1px 0 1px #fff;border-radius:2px"></div>
<div class="t" style="left:655.0px;top:468px;font-size:10.5px;color:#333;transform-origin:0 0;transform:scaleX(0.8956);">Deviation Rates...</div>
<div class="t" style="left:736.0px;width:90px;text-align:center;transform-origin:50% 0;top:468px;font-size:10.5px;color:#333;transform:scaleX(0.9000);">Navi runs ...</div>
<svg style="left:7px;top:619px" width="14" height="16"><path d="M2.3 5.3C2.3 3.3 4 2.3 6.4 2.3C9.1 2.3 10.7 3.6 10.7 5.3C10.7 7.1 8.9 7.7 7.7 8.3C6.8 8.8 6.5 9.3 6.5 10.7" stroke="#0b6aae" stroke-width="2.5" fill="none"/><rect x="5.1" y="11.8" width="2.8" height="2.3" rx="0.8" fill="#0b6aae"/></svg>
<div class="a" style="left:792px;top:615px;width:68px;height:23px;background:#e1e1e1;border:1px solid #adadad;"></div>
<div class="t" style="left:812px;top:622px;font-size:10.5px;color:#000;transform-origin:0 0;transform:scaleX(0.8686);">Cancel</div>
</body></html>
